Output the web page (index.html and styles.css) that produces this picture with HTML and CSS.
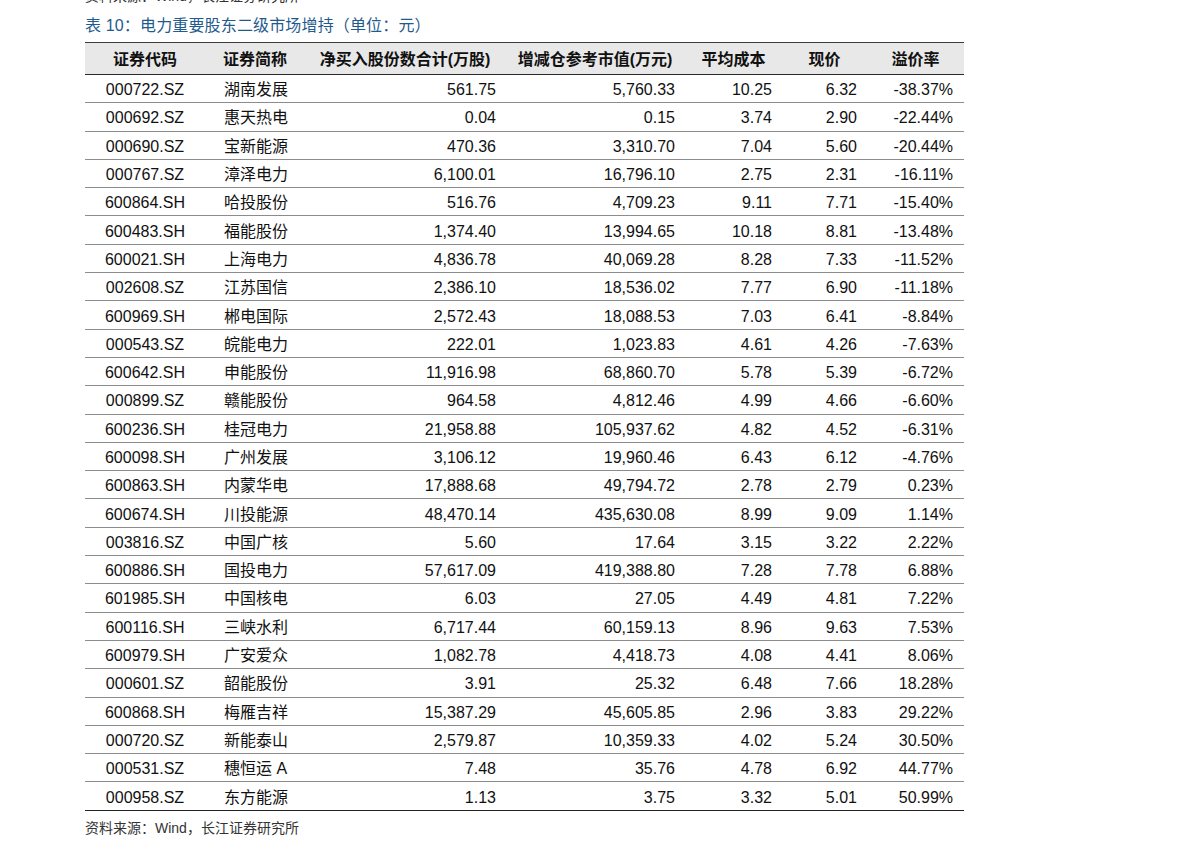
FILE: index.html
```html
<!DOCTYPE html>
<html lang="zh-CN">
<head>
<meta charset="utf-8">
<title>电力重要股东二级市场增持</title>
<link rel="stylesheet" href="styles.css">
</head>
<body>
<div class="page">
  <div class="cut"><span>资料来源：Wind，长江证券研究所</span></div>
  <div class="title">表 10：电力重要股东二级市场增持（单位：元）</div>
  <table class="data">
    <colgroup>
      <col class="c1"><col class="c2"><col class="c3"><col class="c4"><col class="c5"><col class="c6"><col class="c7">
    </colgroup>
    <thead>
      <tr><th>证券代码</th><th>证券简称</th><th>净买入股份数合计(万股)</th><th>增减仓参考市值(万元)</th><th>平均成本</th><th>现价</th><th>溢价率</th></tr>
    </thead>
    <tbody>
      <tr><td>000722.SZ</td><td>湖南发展</td><td>561.75</td><td>5,760.33</td><td>10.25</td><td>6.32</td><td>-38.37%</td></tr>
      <tr><td>000692.SZ</td><td>惠天热电</td><td>0.04</td><td>0.15</td><td>3.74</td><td>2.90</td><td>-22.44%</td></tr>
      <tr><td>000690.SZ</td><td>宝新能源</td><td>470.36</td><td>3,310.70</td><td>7.04</td><td>5.60</td><td>-20.44%</td></tr>
      <tr><td>000767.SZ</td><td>漳泽电力</td><td>6,100.01</td><td>16,796.10</td><td>2.75</td><td>2.31</td><td>-16.11%</td></tr>
      <tr><td>600864.SH</td><td>哈投股份</td><td>516.76</td><td>4,709.23</td><td>9.11</td><td>7.71</td><td>-15.40%</td></tr>
      <tr><td>600483.SH</td><td>福能股份</td><td>1,374.40</td><td>13,994.65</td><td>10.18</td><td>8.81</td><td>-13.48%</td></tr>
      <tr><td>600021.SH</td><td>上海电力</td><td>4,836.78</td><td>40,069.28</td><td>8.28</td><td>7.33</td><td>-11.52%</td></tr>
      <tr><td>002608.SZ</td><td>江苏国信</td><td>2,386.10</td><td>18,536.02</td><td>7.77</td><td>6.90</td><td>-11.18%</td></tr>
      <tr><td>600969.SH</td><td>郴电国际</td><td>2,572.43</td><td>18,088.53</td><td>7.03</td><td>6.41</td><td>-8.84%</td></tr>
      <tr><td>000543.SZ</td><td>皖能电力</td><td>222.01</td><td>1,023.83</td><td>4.61</td><td>4.26</td><td>-7.63%</td></tr>
      <tr><td>600642.SH</td><td>申能股份</td><td>11,916.98</td><td>68,860.70</td><td>5.78</td><td>5.39</td><td>-6.72%</td></tr>
      <tr><td>000899.SZ</td><td>赣能股份</td><td>964.58</td><td>4,812.46</td><td>4.99</td><td>4.66</td><td>-6.60%</td></tr>
      <tr><td>600236.SH</td><td>桂冠电力</td><td>21,958.88</td><td>105,937.62</td><td>4.82</td><td>4.52</td><td>-6.31%</td></tr>
      <tr><td>600098.SH</td><td>广州发展</td><td>3,106.12</td><td>19,960.46</td><td>6.43</td><td>6.12</td><td>-4.76%</td></tr>
      <tr><td>600863.SH</td><td>内蒙华电</td><td>17,888.68</td><td>49,794.72</td><td>2.78</td><td>2.79</td><td>0.23%</td></tr>
      <tr><td>600674.SH</td><td>川投能源</td><td>48,470.14</td><td>435,630.08</td><td>8.99</td><td>9.09</td><td>1.14%</td></tr>
      <tr><td>003816.SZ</td><td>中国广核</td><td>5.60</td><td>17.64</td><td>3.15</td><td>3.22</td><td>2.22%</td></tr>
      <tr><td>600886.SH</td><td>国投电力</td><td>57,617.09</td><td>419,388.80</td><td>7.28</td><td>7.78</td><td>6.88%</td></tr>
      <tr><td>601985.SH</td><td>中国核电</td><td>6.03</td><td>27.05</td><td>4.49</td><td>4.81</td><td>7.22%</td></tr>
      <tr><td>600116.SH</td><td>三峡水利</td><td>6,717.44</td><td>60,159.13</td><td>8.96</td><td>9.63</td><td>7.53%</td></tr>
      <tr><td>600979.SH</td><td>广安爱众</td><td>1,082.78</td><td>4,418.73</td><td>4.08</td><td>4.41</td><td>8.06%</td></tr>
      <tr><td>000601.SZ</td><td>韶能股份</td><td>3.91</td><td>25.32</td><td>6.48</td><td>7.66</td><td>18.28%</td></tr>
      <tr><td>600868.SH</td><td>梅雁吉祥</td><td>15,387.29</td><td>45,605.85</td><td>2.96</td><td>3.83</td><td>29.22%</td></tr>
      <tr><td>000720.SZ</td><td>新能泰山</td><td>2,579.87</td><td>10,359.33</td><td>4.02</td><td>5.24</td><td>30.50%</td></tr>
      <tr><td>000531.SZ</td><td>穗恒运 A</td><td>7.48</td><td>35.76</td><td>4.78</td><td>6.92</td><td>44.77%</td></tr>
      <tr><td>000958.SZ</td><td>东方能源</td><td>1.13</td><td>3.75</td><td>3.32</td><td>5.01</td><td>50.99%</td></tr>
    </tbody>
  </table>
  <div class="source">资料来源：Wind，长江证券研究所</div>
</div>
</body>
</html>
```
FILE: styles.css
```css
html, body {
  margin: 0;
  padding: 0;
  background: #ffffff;
}
body {
  font-family: "Liberation Sans", "Noto Sans CJK SC", sans-serif;
  color: #111111;
}
.page {
  padding-left: 85px;
  width: 879px;
}
.cut {
  height: 5px;
  overflow: hidden;
}
.cut span {
  display: block;
  font-size: 14px;
  line-height: 16px;
  margin-top: -12px;
  color: #333333;
}
.title {
  margin-top: 11px;
  font-size: 16px;
  line-height: 20px;
  color: #1f5b8e;
  letter-spacing: 0.15px;
}
.data {
  margin-top: 6px;
  width: 879px;
  border-collapse: collapse;
  table-layout: fixed;
  font-size: 16px;
}
.c1 { width: 120px; }
.c2 { width: 100px; }
.c3 { width: 200px; }
.c4 { width: 180px; }
.c5 { width: 97px; }
.c6 { width: 85px; }
.c7 { width: 97px; }
.data thead tr {
  background: #e8e8e8;
  border-top: 1px solid #3a3a3a;
  border-bottom: 1px solid #2a2a2a;
}
.data th {
  height: 30px;
  padding: 0 0 1px 0;
  font-weight: bold;
  text-align: center;
  color: #111111;
  white-space: nowrap;
}
.data tbody tr {
  border-bottom: 1px solid #8c8c8c;
}
.data tbody tr:last-child {
  border-bottom: 1px solid #222222;
}
.data td {
  height: 24.3px;
  padding: 3px 11px 0 0;
  text-align: right;
  white-space: nowrap;
  line-height: 18px;
}
.data td:nth-child(1) {
  text-align: center;
  padding: 3px 0 0 0;
}
.data td:nth-child(2) {
  text-align: left;
  padding: 3px 0 0 19px;
}
.data td:nth-child(3) { padding-right: 9px; }
.data td:nth-child(4) { padding-right: 10px; }
.data td:nth-child(5) { padding-right: 10px; }
.data td:nth-child(6) { padding-right: 10px; }
.source {
  margin-top: 8px;
  font-size: 14px;
  line-height: 18px;
  color: #333333;
}
```
